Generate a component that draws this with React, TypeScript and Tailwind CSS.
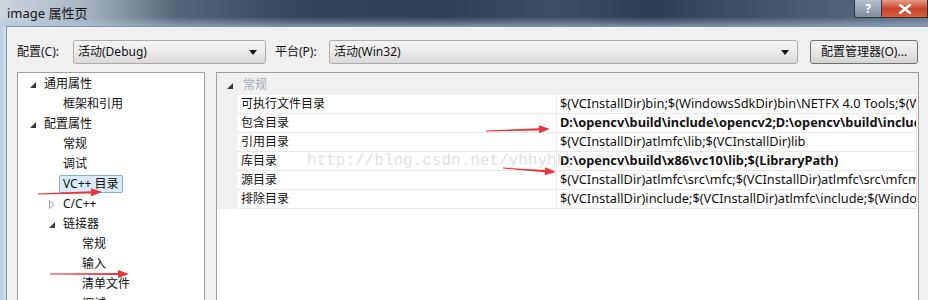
import React from "react";

const cjk = "font-['Noto_Sans','Noto_Sans_CJK_SC',sans-serif]";

type TreeItem = { label: string; level: 0 | 1 | 2; toggle?: "open" | "closed"; selected?: boolean };

const tree: TreeItem[] = [
  { label: "通用属性", level: 0, toggle: "open" },
  { label: "框架和引用", level: 1 },
  { label: "配置属性", level: 0, toggle: "open" },
  { label: "常规", level: 1 },
  { label: "调试", level: 1 },
  { label: "VC++ 目录", level: 1, selected: true },
  { label: "C/C++", level: 1, toggle: "closed" },
  { label: "链接器", level: 1, toggle: "open" },
  { label: "常规", level: 2 },
  { label: "输入", level: 2 },
  { label: "清单文件", level: 2 },
  { label: "调试", level: 2 },
];

const indent: Record<number, string> = { 0: "pl-[12px]", 1: "pl-[31px]", 2: "pl-[50px]" };

const props = [
  { name: "可执行文件目录", value: "$(VCInstallDir)bin;$(WindowsSdkDir)bin\\NETFX 4.0 Tools;$(WindowsSdkDir)bin;$(VSInstallDir)Common7\\Tools\\bin" },
  { name: "包含目录", value: "D:\\opencv\\build\\include\\opencv2;D:\\opencv\\build\\include\\opencv;$(IncludePath)", bold: true },
  { name: "引用目录", value: "$(VCInstallDir)atlmfc\\lib;$(VCInstallDir)lib" },
  { name: "库目录", value: "D:\\opencv\\build\\x86\\vc10\\lib;$(LibraryPath)", bold: true },
  { name: "源目录", value: "$(VCInstallDir)atlmfc\\src\\mfc;$(VCInstallDir)atlmfc\\src\\mfcm;$(VCInstallDir)atlmfc\\src\\atl" },
  { name: "排除目录", value: "$(VCInstallDir)include;$(VCInstallDir)atlmfc\\include;$(WindowsSdkDir)include;$(FrameworkSDKDir)include" },
];

function OpenGlyph() {
  return (
    <svg width="6" height="6" viewBox="0 0 6 6" className="mt-[2px]">
      <path d="M6 0 L6 6 L0 6 Z" fill="#3c3c3c" />
    </svg>
  );
}

function ClosedGlyph() {
  return (
    <svg width="6" height="9" viewBox="0 0 6 9">
      <path d="M0.5 0.5 L5 4.5 L0.5 8.5 Z" fill="none" stroke="#a6a6a6" strokeWidth="1" />
    </svg>
  );
}

function Combo({ text, width }: { text: string; width: string }) {
  return (
    <div className={`${width} h-[24px] flex items-center justify-between pl-[4px] pr-[8px] rounded-[3px] border border-[#acacac] bg-linear-to-b from-[#f4f4f4] via-[#ebebeb] to-[#d8d8d8] text-[12px] text-[#111]`}>
      <span>{text}</span>
      <svg width="8" height="5" viewBox="0 0 8 5">
        <path d="M0 0 L8 0 L4 5 Z" fill="#111" />
      </svg>
    </div>
  );
}

function Arrow({ x1, y1, x2, y2 }: { x1: number; y1: number; x2: number; y2: number }) {
  const ang = Math.atan2(y2 - y1, x2 - x1);
  const len = 11;
  const half = 4;
  const bx = x2 - Math.cos(ang) * len;
  const by = y2 - Math.sin(ang) * len;
  const px = -Math.sin(ang) * half;
  const py = Math.cos(ang) * half;
  return (
    <svg className="absolute left-0 top-0 pointer-events-none" width="928" height="300">
      <polygon
        points={`${x1},${y1 - 0.4} ${bx},${by - 1.1} ${bx},${by + 1.1} ${x1},${y1 + 0.6}`}
        fill="#e9353a"
      />
      <polygon points={`${x2},${y2} ${bx + px},${by + py} ${bx - px},${by - py}`} fill="#e9353a" />
    </svg>
  );
}

export default function App() {
  return (
    <div className={`relative w-[928px] h-[300px] overflow-hidden bg-[#f0f0f0] ${cjk}`}>
      {/* title bar */}
      <div className="h-[26px] flex items-start bg-[linear-gradient(180deg,rgba(255,255,255,0)_65%,rgba(170,195,222,0.55)_100%),linear-gradient(90deg,#cdd5de_0%,#a9b5c2_9%,#56667a_19%,#34445a_32%,#2f3f55_48%,#3d4e63_60%,#2d3e54_70%,#45576c_84%,#5e6f83_100%)]">
        <div className="pl-[7px] pt-[4px] text-[13px] text-[#141414] leading-[18px]">image 属性页</div>
        <div className="ml-auto flex">
          <div className="w-[28px] h-[18px] rounded-bl-[4px] border border-t-0 border-[#2f3c4b] bg-linear-to-b from-[#b4c0cd] to-[#7d8c9d] flex items-center justify-center text-[12px] font-bold text-white leading-none">
            ?
          </div>
          <div className="w-[46px] h-[18px] border border-t-0 border-l-0 border-[#3f2a26] bg-linear-to-b from-[#e59a86] via-[#c8442c] to-[#d85c40] flex items-center justify-center">
            <svg width="12" height="10" viewBox="0 0 12 10">
              <path d="M1 1 L11 9 M11 1 L1 9" stroke="#fff" strokeWidth="2.6" strokeLinecap="square" />
            </svg>
          </div>
        </div>
      </div>

      <div className="flex h-[274px]">
        {/* left frame */}
        <div className="w-[6px] bg-linear-to-r from-[#b9cde3] to-[#d3e0ee]" />
        <div className="flex-1 border-l border-t border-[#8696a8] bg-[#f0f0f0]">
          {/* toolbar */}
          <div className="flex items-center pt-[13px] pl-[10px] text-[12px] text-[#111]">
            <span className="w-[56px]">配置(C):</span>
            <Combo text="活动(Debug)" width="w-[193px]" />
            <span className="w-[63px] pl-[9px]">平台(P):</span>
            <Combo text="活动(Win32)" width="w-[469px]" />
            <div className="ml-[12px] w-[108px] h-[24px] flex items-center justify-center rounded-[3px] border border-[#707070] bg-linear-to-b from-[#f3f3f3] via-[#e8e8e8] to-[#d4d4d4]">
              配置管理器(O)...
            </div>
          </div>

          {/* panels */}
          <div className="flex pl-[10px] mt-[8px]">
            <div className="w-[188px] h-[240px] border border-[#a0a0a0] bg-white pt-[1px] text-[12px] text-[#111]">
              {tree.map((t, i) => (
                <div key={i} className={`h-[20px] flex items-center ${indent[t.level]}`}>
                  <div className="w-[14px] flex items-center">
                    {t.toggle === "open" && <OpenGlyph />}
                    {t.toggle === "closed" && <ClosedGlyph />}
                  </div>
                  {t.selected ? (
                    <span className="-ml-[4px] h-[18px] px-[3px] flex items-center rounded-[2px] border border-[#84acdd] bg-[#dcebfc]">
                      {t.label}
                    </span>
                  ) : (
                    <span>{t.label}</span>
                  )}
                </div>
              ))}
            </div>

            <div className="ml-[11px] w-[703px] h-[240px] border border-[#a0a0a0] bg-white text-[12px] text-[#111]">
              <div className="h-[22px] pt-[2px] flex items-center bg-[#f0f0f0]">
                <div className="w-[20px] flex justify-end pr-[4px]">
                  <OpenGlyph />
                </div>
                <span className="pl-[6px] text-[#a4acb9]">常规</span>
              </div>
              {props.map((p, i) => (
                <div key={i} className="h-[19px] flex">
                  <div className="w-[20px] bg-[#f0f0f0]" />
                  <div className="w-[319px] pl-[4px] flex items-center border-b border-[#e9e9e9]">{p.name}</div>
                  <div
                    className={`w-[361px] pl-[3px] flex items-center overflow-hidden whitespace-nowrap border-b border-l border-r border-[#e9e9e9] text-[12.8px] ${
                      p.bold ? "font-bold" : ""
                    }`}
                  >
                    {p.value}
                  </div>
                </div>
              ))}
            </div>
          </div>
        </div>
      </div>

      {/* watermark */}
      <div className="absolute left-[307px] top-[149px] text-[16px] font-['Liberation_Mono',monospace] text-[#c4c4c4]/50 whitespace-nowrap pointer-events-none">
        http://blog.csdn.net/yhhyhhy
      </div>

      {/* annotation arrows */}
      <Arrow x1={38} y1={194} x2={102} y2={192} />
      <Arrow x1={50} y1={274} x2={129} y2={274} />
      <Arrow x1={486} y1={131} x2={550} y2={129} />
      <Arrow x1={503} y1={168} x2={556} y2={172} />
    </div>
  );
}
